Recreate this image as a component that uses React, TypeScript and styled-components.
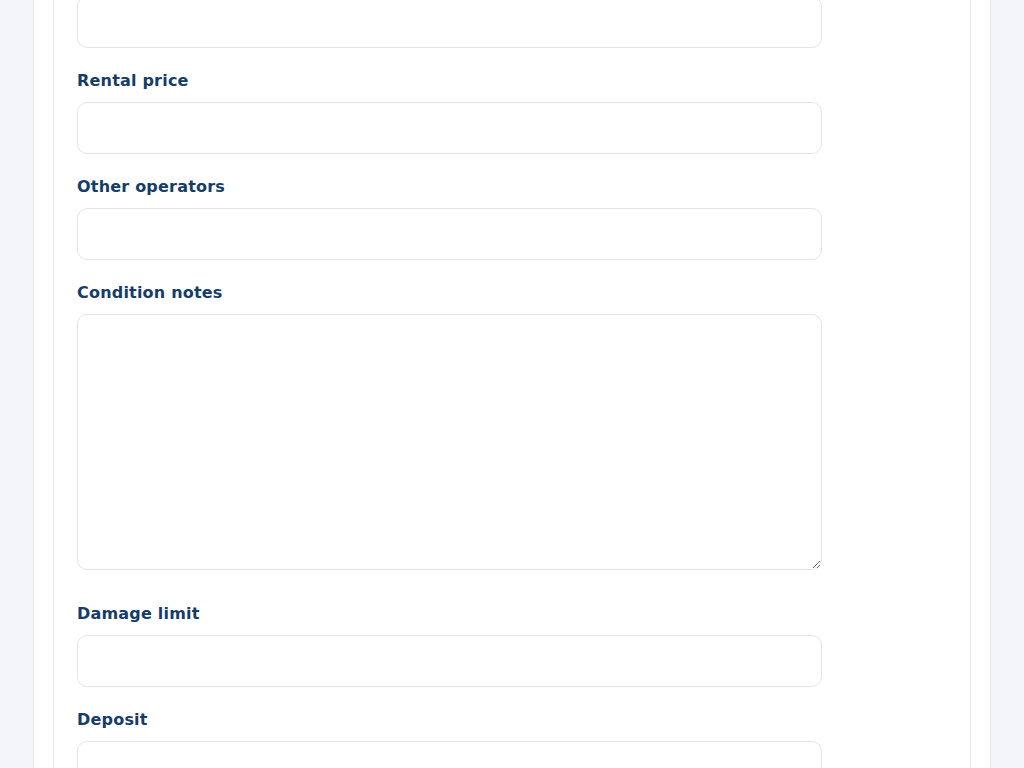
import React from 'react';
import styled, { createGlobalStyle } from 'styled-components';

const GlobalStyle = createGlobalStyle`
  html, body {
    margin: 0;
    padding: 0;
    background: #f4f5fa;
    font-family: "DejaVu Sans", Verdana, sans-serif;
    overflow: hidden;
  }
`;

const Shell = styled.div`
  margin: -26px 33px 0;
  background: #ffffff;
  border-left: 1px solid #e6e8f0;
  border-right: 1px solid #e6e8f0;
  padding: 0 19px;
  min-height: 900px;
`;

const Card = styled.form`
  border: 1px solid #e6e8f0;
  border-radius: 10px;
  background: #ffffff;
  padding: 21px 23px 40px;
  min-height: 900px;
`;

const Field = styled.div<{ $gap?: number }>`
  width: 745px;
  margin-bottom: ${p => p.$gap ?? 20}px;
`;

const Label = styled.label`
  display: block;
  font-size: 16px;
  line-height: 24px;
  font-weight: 700;
  letter-spacing: 0.2px;
  color: #163c69;
  padding-top: 1px;
  margin-bottom: 9px;
`;

const Input = styled.input`
  display: block;
  box-sizing: border-box;
  width: 100%;
  height: 52px;
  border: 1px solid #e3e6ee;
  border-radius: 10px;
  background: #ffffff;
  padding: 0 14px;
  font: inherit;
  font-size: 15px;
  color: #1f2937;
  outline: none;
`;

const TextArea = styled.textarea`
  display: block;
  box-sizing: border-box;
  width: 100%;
  height: 256px;
  border: 1px solid #e3e6ee;
  border-radius: 10px;
  background: #ffffff;
  padding: 12px 14px;
  font: inherit;
  font-size: 15px;
  color: #1f2937;
  outline: none;
`;

const fields = [
  { label: '' },
  { label: 'Rental price' },
  { label: 'Other operators' },
  { label: 'Condition notes', multiline: true },
  { label: 'Damage limit' },
  { label: 'Deposit' },
];

export default function App() {
  return (
    <>
      <GlobalStyle />
      <Shell>
        <Card onSubmit={e => e.preventDefault()}>
          {fields.map((f, i) => (
            <Field key={i} $gap={f.multiline ? 31 : 20}>
              {f.label && <Label>{f.label}</Label>}
              {f.multiline ? <TextArea /> : <Input type="text" />}
            </Field>
          ))}
        </Card>
      </Shell>
    </>
  );
}
